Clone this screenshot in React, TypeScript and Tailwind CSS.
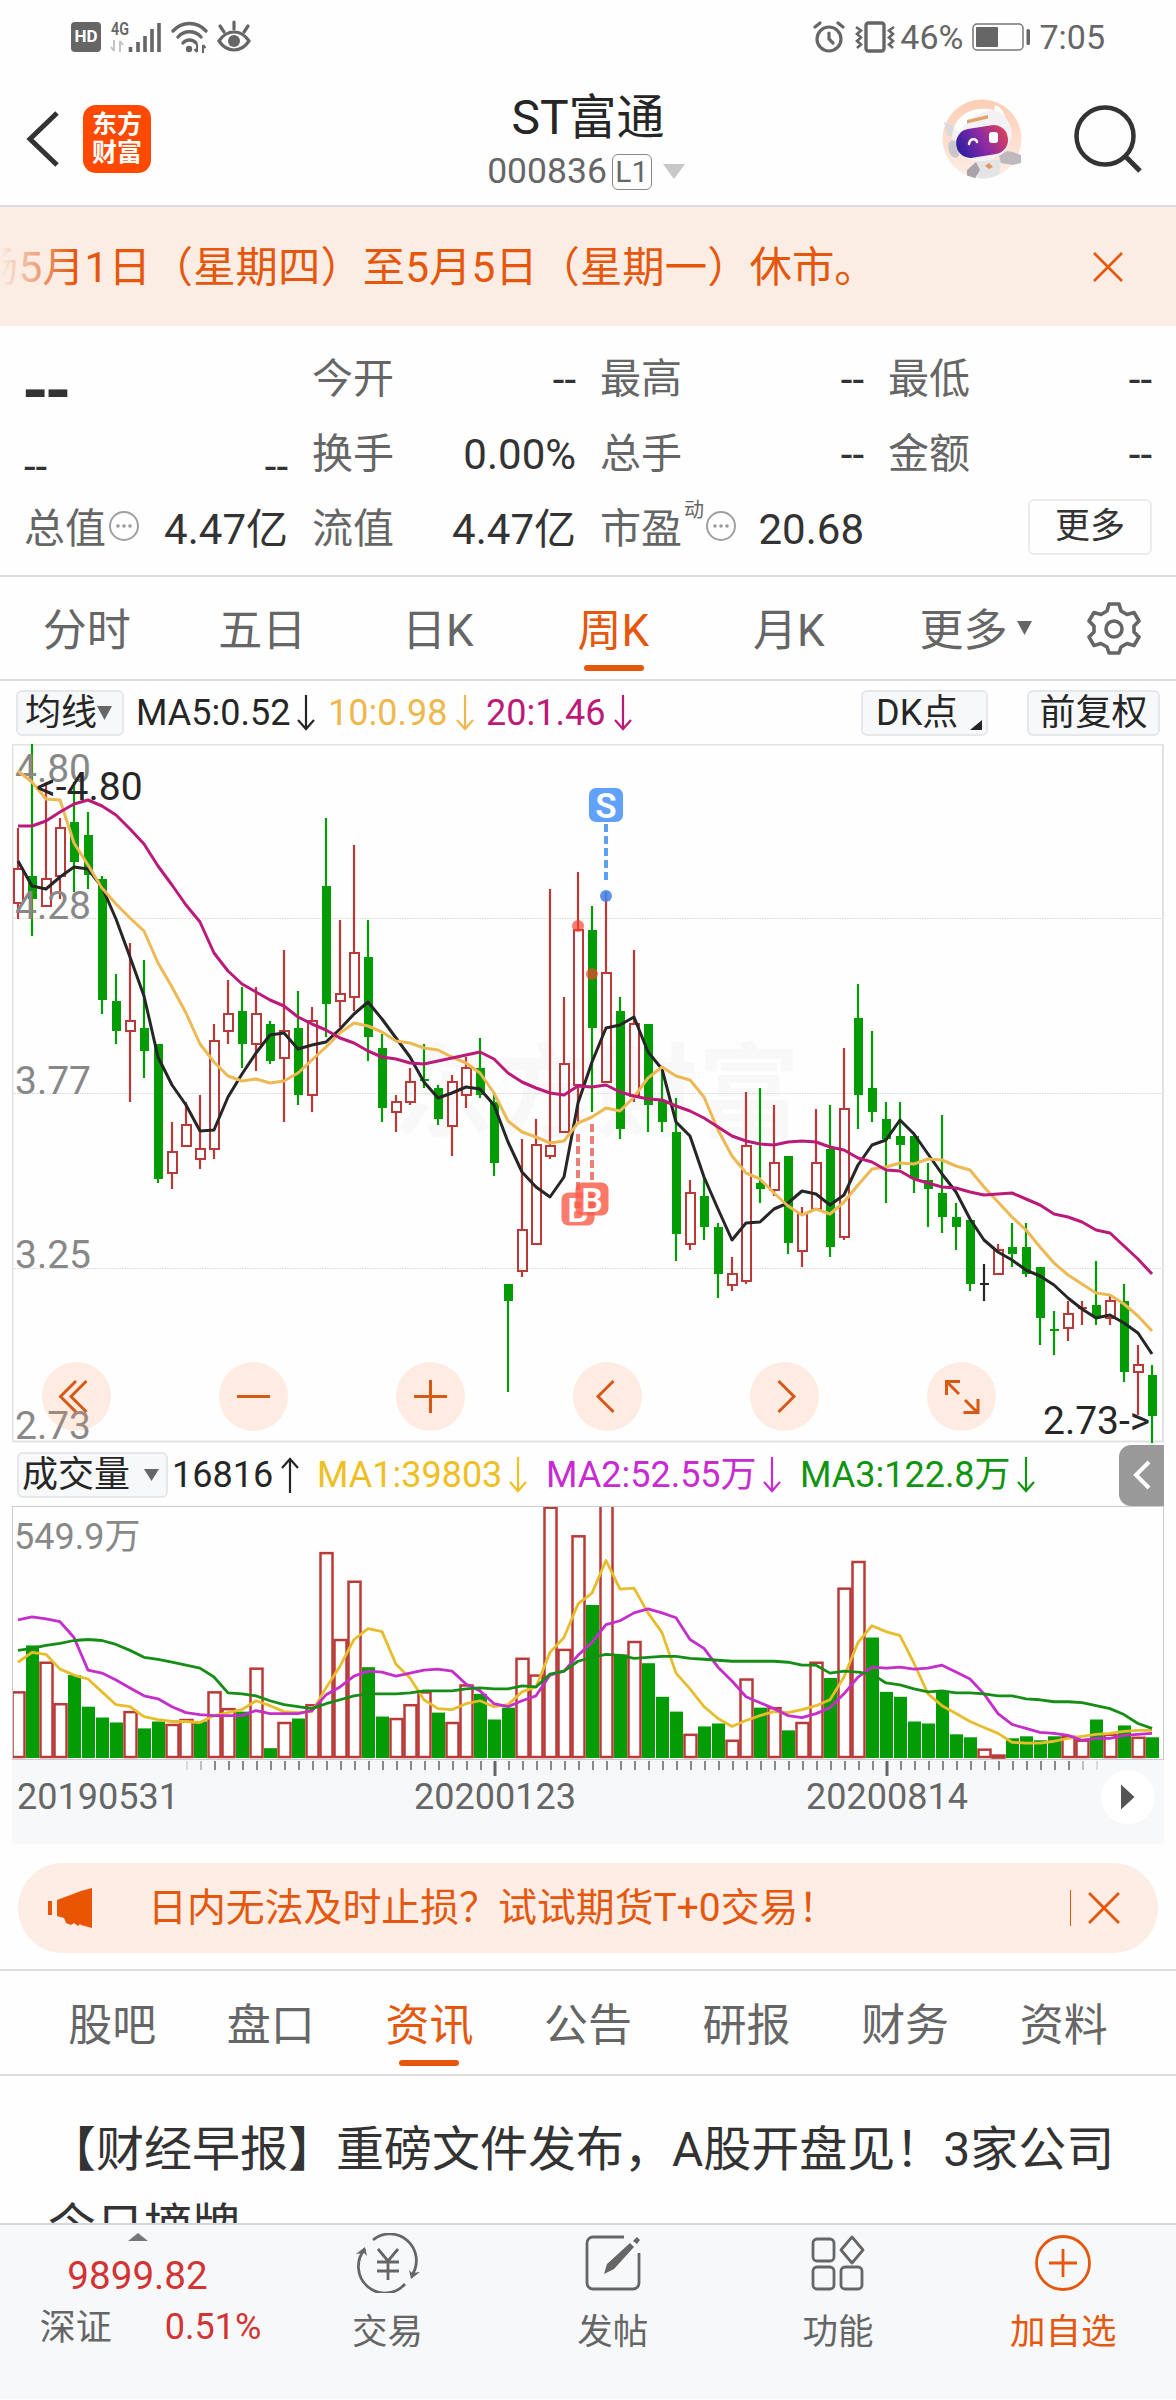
import { ReactNode } from 'react'

type Candle = [high: number, top: number, bottom: number, low: number, kind: 'r' | 'g' | 'k']

// high / body top / body bottom / low, in chart units
const candles: Candle[] = [
  [828, 868, 904, 919, 'r'], [744, 876, 899, 936, 'g'], [782, 878, 907, 907, 'r'], [818, 827, 877, 899, 'r'],
  [782, 822, 862, 892, 'g'], [812, 835, 875, 889, 'g'], [876, 879, 1000, 1014, 'g'], [974, 1001, 1031, 1044, 'g'],
  [943, 1020, 1032, 1102, 'r'], [960, 1028, 1051, 1078, 'g'], [1044, 1044, 1179, 1183, 'g'], [1122, 1151, 1174, 1189, 'r'],
  [1102, 1124, 1147, 1147, 'r'], [1095, 1148, 1160, 1169, 'r'], [1024, 1040, 1150, 1159, 'r'], [980, 1013, 1032, 1044, 'r'],
  [987, 1011, 1044, 1068, 'g'], [987, 1013, 1045, 1071, 'r'], [1021, 1024, 1061, 1064, 'g'], [950, 1030, 1059, 1122, 'r'],
  [991, 1028, 1095, 1105, 'g'], [1007, 1020, 1096, 1112, 'r'], [818, 886, 1004, 1037, 'g'], [920, 993, 1002, 1027, 'r'],
  [845, 952, 998, 1011, 'r'], [920, 957, 1037, 1061, 'g'], [1034, 1048, 1108, 1122, 'g'], [1095, 1101, 1113, 1132, 'r'],
  [1068, 1081, 1103, 1105, 'r'], [1044, 1079, 1081, 1088, 'g'], [1085, 1088, 1119, 1125, 'g'], [1075, 1081, 1127, 1156, 'r'],
  [1057, 1067, 1096, 1108, 'r'], [1038, 1068, 1095, 1098, 'g'], [1092, 1102, 1163, 1176, 'g'], [1284, 1284, 1301, 1392, 'g'],
  [1139, 1229, 1272, 1277, 'r'], [1119, 1144, 1245, 1245, 'r'], [889, 1145, 1157, 1159, 'r'], [997, 1063, 1133, 1133, 'r'],
  [872, 929, 1086, 1122, 'r'], [906, 930, 1028, 1112, 'g'], [892, 972, 1083, 1083, 'r'], [997, 1011, 1129, 1139, 'g'],
  [950, 1023, 1097, 1102, 'r'], [1024, 1024, 1105, 1132, 'g'], [1068, 1101, 1122, 1132, 'g'], [1098, 1132, 1234, 1261, 'g'],
  [1180, 1192, 1245, 1250, 'r'], [1177, 1196, 1227, 1240, 'g'], [1223, 1227, 1274, 1298, 'g'], [1257, 1273, 1286, 1291, 'r'],
  [1092, 1145, 1282, 1284, 'r'], [1088, 1183, 1189, 1203, 'g'], [1105, 1162, 1191, 1196, 'r'], [1156, 1156, 1243, 1254, 'g'],
  [1207, 1213, 1252, 1267, 'r'], [1109, 1162, 1210, 1210, 'r'], [1105, 1149, 1247, 1257, 'g'], [1048, 1108, 1238, 1240, 'r'],
  [984, 1018, 1095, 1129, 'g'], [1031, 1088, 1112, 1122, 'g'], [1102, 1119, 1139, 1203, 'g'], [1102, 1136, 1145, 1169, 'g'],
  [1135, 1136, 1179, 1193, 'g'], [1163, 1180, 1189, 1227, 'g'], [1115, 1193, 1217, 1233, 'g'], [1203, 1217, 1227, 1250, 'g'],
  [1220, 1220, 1284, 1291, 'g'], [1264, 1283, 1285, 1301, 'k'], [1244, 1249, 1275, 1275, 'r'], [1223, 1247, 1254, 1267, 'g'],
  [1223, 1247, 1274, 1277, 'g'], [1267, 1267, 1318, 1345, 'g'], [1311, 1329, 1331, 1355, 'g'], [1301, 1313, 1329, 1341, 'r'],
  [1301, 1307, 1309, 1325, 'r'], [1261, 1305, 1317, 1325, 'g'], [1295, 1300, 1319, 1325, 'r'], [1284, 1301, 1372, 1382, 'g'],
  [1345, 1364, 1373, 1415, 'r'], [1365, 1375, 1416, 1443, 'g'],
]

const ma5 = [861, 886, 889, 877, 867, 869, 887, 919, 957, 996, 1057, 1085, 1105, 1131, 1130, 1097, 1074, 1053, 1035, 1033, 1049, 1045, 1042, 1029, 1014, 1002, 1019, 1038, 1057, 1082, 1098, 1093, 1087, 1089, 1105, 1142, 1172, 1187, 1197, 1177, 1103, 1062, 1028, 1025, 1017, 1052, 1069, 1122, 1136, 1177, 1209, 1240, 1223, 1222, 1209, 1203, 1191, 1194, 1205, 1195, 1165, 1145, 1140, 1120, 1134, 1154, 1174, 1192, 1219, 1240, 1252, 1260, 1270, 1276, 1285, 1298, 1309, 1318, 1315, 1323, 1333, 1354]
const ma10 = [771, 782, 799, 800, 843, 865, 888, 904, 918, 931, 963, 987, 1013, 1044, 1062, 1076, 1081, 1079, 1083, 1081, 1073, 1060, 1047, 1033, 1023, 1026, 1032, 1041, 1043, 1048, 1050, 1057, 1063, 1073, 1093, 1121, 1132, 1137, 1143, 1141, 1123, 1117, 1108, 1111, 1097, 1078, 1067, 1076, 1080, 1097, 1130, 1156, 1173, 1179, 1193, 1206, 1215, 1209, 1214, 1202, 1185, 1169, 1167, 1163, 1164, 1159, 1160, 1166, 1170, 1187, 1202, 1217, 1230, 1247, 1263, 1275, 1284, 1293, 1295, 1304, 1316, 1331]
const ma20 = [826, 826, 821, 812, 804, 800, 806, 815, 829, 844, 866, 885, 905, 922, 953, 971, 984, 992, 1000, 1006, 1017, 1024, 1030, 1038, 1043, 1051, 1057, 1059, 1063, 1064, 1061, 1058, 1055, 1052, 1059, 1073, 1082, 1088, 1093, 1095, 1086, 1087, 1085, 1092, 1096, 1099, 1100, 1106, 1111, 1118, 1127, 1136, 1141, 1144, 1145, 1142, 1141, 1142, 1147, 1150, 1158, 1162, 1170, 1171, 1179, 1183, 1187, 1188, 1192, 1195, 1194, 1193, 1199, 1205, 1214, 1217, 1222, 1230, 1233, 1246, 1259, 1274]

const volTops = [1694, 1648, 1664, 1706, 1678, 1710, 1721, 1726, 1714, 1732, 1725, 1727, 1722, 1725, 1694, 1711, 1715, 1670, 1752, 1725, 1722, 1707, 1553, 1641, 1582, 1670, 1720, 1721, 1707, 1694, 1716, 1725, 1687, 1697, 1723, 1711, 1660, 1677, 1507, 1651, 1536, 1607, 1500, 1657, 1643, 1666, 1700, 1715, 1737, 1730, 1727, 1743, 1681, 1711, 1710, 1734, 1725, 1664, 1681, 1589, 1562, 1640, 1695, 1700, 1725, 1727, 1695, 1738, 1741, 1752, 1758, 1742, 1740, 1744, 1740, 1739, 1743, 1723, 1737, 1729, 1740, 1741]
const volColors = 'rgrrggggrggrrgrrgrgrgrrrrggrrrgrrgggrrrrrgrgrggg'.concat('rggrrgrgrrgrrgggggggg', 'rrggggrrgrgrg')
const vma1 = [1665, 1655, 1657, 1672, 1678, 1682, 1695, 1708, 1710, 1720, 1723, 1725, 1725, 1726, 1719, 1716, 1713, 1704, 1709, 1715, 1716, 1715, 1691, 1669, 1642, 1631, 1634, 1667, 1681, 1703, 1712, 1713, 1707, 1704, 1710, 1708, 1695, 1690, 1655, 1640, 1606, 1595, 1562, 1591, 1590, 1615, 1635, 1676, 1692, 1710, 1722, 1730, 1724, 1719, 1715, 1716, 1713, 1709, 1703, 1680, 1645, 1628, 1634, 1638, 1666, 1697, 1709, 1717, 1725, 1731, 1737, 1746, 1747, 1747, 1745, 1742, 1740, 1738, 1737, 1735, 1734, 1734]
const vma2 = [1622, 1619, 1621, 1624, 1640, 1673, 1676, 1683, 1691, 1699, 1702, 1710, 1716, 1718, 1719, 1719, 1719, 1714, 1717, 1717, 1717, 1714, 1698, 1690, 1679, 1674, 1675, 1679, 1676, 1673, 1672, 1674, 1687, 1694, 1707, 1710, 1704, 1699, 1678, 1674, 1658, 1645, 1627, 1623, 1615, 1611, 1615, 1620, 1642, 1651, 1670, 1684, 1700, 1706, 1712, 1719, 1721, 1717, 1711, 1697, 1680, 1670, 1671, 1670, 1672, 1671, 1668, 1675, 1682, 1697, 1717, 1728, 1732, 1736, 1737, 1739, 1744, 1742, 1742, 1739, 1738, 1737]
const vma3 = [1653, 1651, 1648, 1646, 1643, 1642, 1643, 1647, 1653, 1660, 1662, 1665, 1668, 1671, 1680, 1696, 1697, 1699, 1704, 1708, 1710, 1712, 1707, 1703, 1699, 1697, 1697, 1697, 1696, 1694, 1694, 1694, 1692, 1691, 1692, 1692, 1689, 1690, 1677, 1674, 1664, 1660, 1657, 1658, 1661, 1660, 1659, 1659, 1661, 1662, 1663, 1664, 1664, 1664, 1664, 1665, 1668, 1668, 1676, 1674, 1675, 1677, 1686, 1688, 1692, 1695, 1694, 1696, 1696, 1697, 1699, 1699, 1702, 1703, 1705, 1705, 1706, 1709, 1712, 1718, 1727, 1732]

const px = (i: number) => 18 + i * 14
const volY = (v: number) => 1440 + (v - 1440) * 0.9877
const toPoints = (values: number[]) => values.map((v, i) => `${px(i)},${v}`).join(' ')

const candleColor = { r: '#b93a38', g: '#049c04', k: '#262626' }

function StatusBar() {
  return (
    <div className="h-[72px] flex items-center justify-between pl-[71px] pr-[71px] pt-px text-[#666]">
      <div className="flex items-center">
        <div className="w-[30px] h-[30px] rounded-[4px] bg-[#666] text-white text-[17px] font-bold flex items-center justify-center leading-none">
          HD
        </div>
        <svg width="52" height="34" viewBox="0 0 52 34" className="ml-[9px]">
          <text x="1" y="15" fontSize="18" fontWeight="600" fill="#666" textLength="18" lengthAdjust="spacingAndGlyphs">4G</text>
          <path d="M4 20v11M4 31l-3-4M10 32V21M10 21l3 4" stroke="#c4c4c4" strokeWidth="2" fill="none" />
          <path d="M20.500 27v5M28 22v10M35 16v16M42 9v23M49 3v29" stroke="#666" strokeWidth="3.600" />
        </svg>
        <svg width="40" height="34" viewBox="0 0 40 34" className="ml-2">
          <g fill="none" stroke="#666" strokeWidth="3.400" strokeLinecap="round">
            <path d="M3 11c9-10 24-10 33 0" />
            <path d="M8 17c6-7 17-7 23 0" />
            <path d="M13 23c3.500-4 9.500-4 13 0" />
          </g>
          <circle cx="19" cy="29" r="3.200" fill="#666" />
          <path d="M27 24v8M27 32l-2.500-3M33 33v-8M33 25l2.500 3" stroke="#666" strokeWidth="2" />
        </svg>
        <svg width="36" height="34" viewBox="0 0 36 34" className="ml-[6px]">
          <g fill="none" stroke="#666" strokeWidth="3.200" strokeLinecap="round">
            <path d="M3 21c8-12 22-12 30 0c-8 12-22 12-30 0z" />
            <path d="M18 2v7M4 6l4 6M32 6l-4 6" />
          </g>
          <circle cx="18" cy="21" r="6" fill="#666" />
        </svg>
      </div>
      <div className="flex items-center">
        <svg width="32" height="32" viewBox="0 0 32 32">
          <g fill="none" stroke="#666" strokeWidth="3.200" strokeLinecap="round">
            <circle cx="16" cy="18" r="12" />
            <path d="M16 12v6l4 4" />
            <path d="M2 6l5-4M30 6l-5-4" />
          </g>
        </svg>
        <svg width="40" height="32" viewBox="0 0 40 32" className="ml-[10px]">
          <g fill="none" stroke="#666" strokeWidth="3.400">
            <rect x="11" y="2" width="18" height="28" rx="2.500" />
            <path strokeWidth="2.600" d="M1 6l5 3.500-4 3.500 4 3.500-4 3.500 4 3.500-4 3.500M39 6l-5 3.500 4 3.500-4 3.500 4 3.500-4 3.500 4 3.500" />
          </g>
        </svg>
        <span className="ml-[5px] text-[34px] leading-none">46%</span>
        <svg width="60" height="28" viewBox="0 0 60 28" className="ml-[9px]">
          <rect x="1" y="1" width="50" height="26" rx="4" fill="none" stroke="#777" strokeWidth="1.500" />
          <rect x="4" y="4" width="22" height="20" rx="1" fill="#666" />
          <rect x="54.500" y="6" width="3.500" height="16" rx="1.500" fill="#666" />
        </svg>
        <span className="ml-[7px] text-[34px] leading-none">7:05</span>
      </div>
    </div>
  )
}

function Robot() {
  return (
    <svg width="82" height="82" viewBox="0 0 82 82">
      <defs>
        <linearGradient id="face" x1="0" y1="0.600" x2="1" y2="0.400">
          <stop offset="0" stopColor="#2a1fa0" />
          <stop offset="0.500" stopColor="#8a2aa6" />
          <stop offset="1" stopColor="#d8405a" />
        </linearGradient>
        <linearGradient id="halo" x1="0" y1="0" x2="0" y2="1">
          <stop offset="0" stopColor="#fdcdb4" />
          <stop offset="1" stopColor="#fdeee6" />
        </linearGradient>
        <clipPath id="haloClip"><circle cx="41" cy="41" r="39.500" /></clipPath>
      </defs>
      <circle cx="41" cy="41" r="39.500" fill="url(#halo)" />
      <g clipPath="url(#haloClip)">
        <path d="M36 62h24l-3 22h-20z" fill="#e4e3e6" />
        <path d="M26 72l9-8 4 8-6 10-7-2z" fill="#a8a3a8" />
        <path d="M44 68l4-3 4 4-4 2z" fill="#e8945c" />
      </g>
      <path d="M3 24l10 4 3 12-10-3z" fill="#dcdadc" />
      <path d="M54 7c8 3 11 9 10 20l-12-9z" fill="#fbfafb" />
      <ellipse cx="41" cy="37" rx="30" ry="26" fill="#f3f1f3" transform="rotate(-12 41 37)" />
      <path d="M13 30C18 14 36 8 52 12 40 14 26 20 20 34z" fill="#fff" />
      <ellipse cx="13" cy="51" rx="5.500" ry="9" fill="#c9c6cc" transform="rotate(-14 13 51)" />
      <path d="M58 58l8-5 6 1 8 3v8l-8 2-12-2z" fill="#bdb9be" />
      <rect x="15" y="29" width="52" height="29" rx="14" fill="url(#face)" transform="rotate(-9 41 43)" />
      <path d="M28 46c1-6 7-6 8-2" fill="none" stroke="#fff" strokeWidth="2.500" strokeLinecap="round" />
      <rect x="48" y="34" width="9" height="11" rx="3" fill="#fff" />
      <path d="M26 22l21-5v3.500l-21 5z" fill="#e0a46c" />
    </svg>
  )
}

function Header() {
  return (
    <div className="h-[135px] border-b-2 border-[#dcdde0] grid grid-cols-[1fr_auto_1fr] items-center">
      <div className="flex items-center pl-[26px]">
        <svg width="34" height="56" viewBox="0 0 34 56">
          <path d="M31 2L4 28l27 26" fill="none" stroke="#333" strokeWidth="5" />
        </svg>
        <div className="ml-[23px] w-[68px] h-[68px] rounded-[13px] bg-[#ff4800] text-white text-[25px] font-bold flex flex-col items-center justify-center leading-[28px]">
          <span>东方</span>
          <span>财富</span>
        </div>
      </div>
      <div className="flex flex-col items-center pt-[2px]">
        <div className="text-[48px] leading-[56px] text-[#262626]">ST富通</div>
        <div className="flex items-center mt-[8px] ml-[-4px] text-[#666]">
          <span className="text-[35.500px] leading-none">000836</span>
          <span className="ml-[5px] w-[40px] h-[36px] rounded-[6px] border-[1.500px] border-[#888] text-[30px] leading-none flex items-center justify-center">L1</span>
          <svg width="22" height="15" viewBox="0 0 22 15" className="ml-[11px]">
            <path d="M0 0h22L11 15z" fill="#c8c8c8" />
          </svg>
        </div>
      </div>
      <div className="flex items-center justify-end pr-[33px]">
        <Robot />
        <svg width="70" height="70" viewBox="0 0 70 70" className="ml-[50px]">
          <circle cx="32" cy="32" r="28.500" fill="none" stroke="#333" strokeWidth="4.500" />
          <path d="M52 52l15 15" stroke="#333" strokeWidth="5" />
        </svg>
      </div>
    </div>
  )
}

function CloseIcon({ size = 30 }: { size?: number }) {
  return (
    <svg width={size} height={size} viewBox="0 0 30 30">
      <path d="M1 1l28 28M29 1L1 29" stroke="#e5570d" strokeWidth="2.700" />
    </svg>
  )
}

function Notice() {
  return (
    <div className="h-[119px] bg-[#fcede4] flex items-center justify-between overflow-hidden">
      <div className="relative flex-1 overflow-hidden pt-[2px]">
        <div className="ml-[-24px] text-[42.400px] leading-[60px] whitespace-nowrap text-[#e5570d]">
          场5月1日（星期四）至5月5日（星期一）休市。
        </div>
        <div className="absolute left-0 top-0 h-full w-[75px] bg-linear-to-r from-[#fcede4] to-[#fcede400]"></div>
      </div>
      <div className="pr-[53px] pt-px">
        <CloseIcon />
      </div>
    </div>
  )
}

function InfoDot() {
  return (
    <svg width="32" height="32" viewBox="0 0 32 32">
      <circle cx="16" cy="16" r="14" fill="none" stroke="#a0a0a0" strokeWidth="2" />
      <circle cx="10" cy="16" r="1.800" fill="#999" />
      <circle cx="16" cy="16" r="1.800" fill="#999" />
      <circle cx="22" cy="16" r="1.800" fill="#999" />
    </svg>
  )
}

function Cell({ label, value }: { label: string; value: string }) {
  return (
    <div className="flex items-center justify-between">
      <span className="text-[41px] text-[#666]">{label}</span>
      <span>{value}</span>
    </div>
  )
}

function Quote() {
  return (
    <div className="h-[251px] border-b-2 border-[#dcdde0] px-6 pt-[16px] text-[42px] leading-none text-[#333]">
      <div className="grid grid-cols-4 gap-x-6 auto-rows-[75px]">
        <div className="flex items-center pt-[22px] ml-[-2px] text-[68px] tracking-[-4px] font-bold">--</div>
        <Cell label="今开" value="--" />
        <Cell label="最高" value="--" />
        <Cell label="最低" value="--" />
        <div className="flex items-center justify-between pt-[24px]">
          <span>--</span>
          <span>--</span>
        </div>
        <Cell label="换手" value="0.00%" />
        <Cell label="总手" value="--" />
        <Cell label="金额" value="--" />
        <div className="flex items-center">
          <span className="text-[41px] text-[#666]">总值</span>
          <span className="ml-[2px] mb-[8px]"><InfoDot /></span>
          <span className="ml-auto">4.47亿</span>
        </div>
        <Cell label="流值" value="4.47亿" />
        <div className="flex items-center">
          <span className="text-[41px] text-[#666]">市盈</span>
          <span className="self-start mt-[8px] ml-[2px] text-[20px] text-[#666]">动</span>
          <span className="ml-px mb-[8px]"><InfoDot /></span>
          <span className="ml-auto">20.68</span>
        </div>
        <div className="flex items-center justify-end">
          <span className="w-[124px] h-[56px] mb-[6px] border-2 border-[#ebebee] rounded-[6px] text-[35px] flex items-center justify-center">更多</span>
        </div>
      </div>
    </div>
  )
}

function PeriodTabs() {
  const tabs = ['分时', '五日', '日K', '周K', '月K']
  return (
    <div className="h-[104px] border-b-2 border-[#dcdde0] flex text-[44px] leading-none text-[#666]">
      {tabs.map((tab) => (
        <div key={tab} className={`w-[175.500px] flex flex-col items-center pt-[32px] ${tab === '周K' ? 'text-[#e5570d]' : ''}`}>
          <span className="ml-[-2px]">{tab}</span>
          {tab === '周K' && <span className="mt-[12px] h-[6px] w-[60px] rounded-full bg-[#e5570d]"></span>}
        </div>
      ))}
      <div className="pt-[32px] ml-[42px] flex items-start">
        <span>更多</span>
        <svg width="15" height="14" viewBox="0 0 15 14" className="ml-[9px] mt-[12px]">
          <path d="M0 0h15L7.500 14z" fill="#666" />
        </svg>
      </div>
      <svg width="54" height="54" viewBox="0 0 54 54" className="ml-auto mr-[35px] mt-[24px]">
        <path
          d="M22 3h10l2 7 6 3.500 7-2 5 8.500-5 5v6l5 5-5 8.500-7-2-6 3.500-2 6H22l-2-6-6-3.500-7 2L2 36l5-5v-6l-5-5 5-8.500 7 2L20 10z"
          fill="none" stroke="#666" strokeWidth="3.600" strokeLinejoin="round"
        />
        <circle cx="27" cy="28" r="8" fill="none" stroke="#666" strokeWidth="3.600" />
      </svg>
    </div>
  )
}

function Arrow({ up = false }: { up?: boolean }) {
  return (
    <svg width="18" height="36" viewBox="0 0 18 36" className={up ? 'rotate-180' : ''}>
      <path d="M9 0v34M1 25l8 9 8-9" fill="none" stroke="currentColor" strokeWidth="2.200" />
    </svg>
  )
}

function Legend({ text, width, color, up }: { text: string; width: string; color: string; up?: boolean }) {
  return (
    <div className={`flex items-center justify-between ${width} ${color}`}>
      <span>{text}</span>
      <Arrow up={up} />
    </div>
  )
}

function Chip({ className, children }: { className: string; children: ReactNode }) {
  return (
    <div className={`h-[46px] rounded-[6px] border-2 border-[#e6e7ea] bg-[#f7f8fa] flex items-center ${className}`}>
      {children}
    </div>
  )
}

function MaRow() {
  return (
    <div className="h-[63px] flex items-center pl-4 pr-4 text-[36px] leading-none text-[#262626]">
      <Chip className="w-[108px] pl-[7px]">
        <span>均线</span>
        <svg width="15" height="14" viewBox="0 0 15 14">
          <path d="M0 0h15L7.500 14z" fill="#666" />
        </svg>
      </Chip>
      <Legend text="MA5:0.52" width="ml-[12px] w-[179px]" color="text-[#262626]" />
      <Legend text="10:0.98" width="ml-[13px] w-[146px]" color="text-[#efb84e]" />
      <Legend text="20:1.46" width="ml-[12px] w-[146px]" color="text-[#bb1a78]" />
      <Chip className="w-[127px] ml-auto pl-[13px] relative">
        <span>DK点</span>
        <svg width="12" height="10" viewBox="0 0 12 10" className="absolute right-[4px] bottom-[4px]">
          <path d="M12 0v10H0z" fill="#262626" />
        </svg>
      </Chip>
      <Chip className="w-[133px] ml-[39px] justify-center">前复权</Chip>
    </div>
  )
}

function PriceChart() {
  const grid = [918.5, 1093.5, 1268.5]
  const labels: [string, number][] = [['4.80', 782], ['4.28', 919], ['3.77', 1094], ['3.25', 1268], ['2.73', 1439]]
  return (
    <svg width="1152" height="700" viewBox="12 744 1152 700" className="block">
      <text x="392" y="1129" fontSize="102" fontWeight="700" fill="#f8f8f8">东方财富</text>
      {grid.map((y) => (
        <line key={y} x1="12" x2="1164" y1={y} y2={y} stroke="#d8d8d8" strokeWidth="1" strokeDasharray="1.500 1" />
      ))}
      <path d="M12.500 744V1442M1163 744V1442M12 744.500H1164M12 1441.500H1164" stroke="#e2e2e2" strokeWidth="2" />
      {candles.map(([high, top, bottom, low, kind], i) => {
        const c = px(i)
        const color = candleColor[kind]
        const flat = bottom - top <= 2
        return (
          <g key={i}>
            <path d={`M${c} ${high}V${top}M${c} ${bottom}V${low}`} stroke={color} strokeWidth="2.200" />
            {flat ? (
              <path d={`M${c - 4} ${top + 1}H${c + 5}M${c} ${high}V${low}`} stroke={color} strokeWidth="2" />
            ) : kind === 'r' ? (
              <rect x={c - 4} y={top + 1} width="9" height={bottom - top - 2} fill="none" stroke={color} strokeWidth="2" />
            ) : (
              <rect x={c - 4} y={top} width="9" height={bottom - top} fill={color} />
            )}
          </g>
        )
      })}
      <g fontSize="39" fill="#888">
        {labels.map(([text, y]) => (
          <text key={text} x="15" y={y}>{text}</text>
        ))}
      </g>
      <g fill="none" strokeWidth="3" strokeLinejoin="round">
        <polyline points={toPoints(ma5)} stroke="#262626" />
        <polyline points={toPoints(ma10)} stroke="#ecb954" />
        <polyline points={toPoints(ma20)} stroke="#bb1a78" />
      </g>
      <g fontSize="39" fill="#262626">
        <text x="36" y="800">&lt;-4.80</text>
        <text x="1043" y="1434">2.73-&gt;</text>
      </g>

      {/* trade marks */}
      <path d="M606 824v56" stroke="#5e9ff0" strokeWidth="4" strokeDasharray="8 4" />
      <circle cx="606" cy="896" r="6" fill="#3f7fe8" fillOpacity="0.850" />
      <rect x="589" y="788" width="34" height="34" rx="7" fill="#62a1fa" />
      <text x="606" y="818" fontSize="35" fontWeight="600" textAnchor="middle" fill="#fff">S</text>
      <g fill="#f4452f" fillOpacity="0.700">
        <circle cx="578" cy="926" r="6" />
        <circle cx="592" cy="974" r="6" />
      </g>
      <path d="M578 1134v58M592 1124v58" stroke="#ea8176" strokeWidth="4" strokeDasharray="8 4" />
      <rect x="561.500" y="1192.500" width="33" height="33" rx="7" fill="#fa7c6c" />
      <text x="578" y="1221.500" fontSize="34" fontWeight="600" textAnchor="middle" fill="#fff">B</text>
      <rect x="575.500" y="1182.500" width="33" height="33" rx="7" fill="#fa5c48" fillOpacity="0.820" />
      <text x="592" y="1211.500" fontSize="34" fontWeight="600" textAnchor="middle" fill="#fff">B</text>
    </svg>
  )
}

function ChartControls() {
  const paths = [
    'M34 19L18.500 34.500 34 50M44.500 19L29 34.500 44.500 50',
    'M18 34.500h33',
    'M18 34.500h33M34.500 18v33',
    'M40.500 19L25 34.500 40.500 50',
    'M28.500 19L44 34.500 28.500 50',
    'M19.500 33V19.500H33M20 20l12 12M38 38l12 12M51 37v13.500H36.500',
  ]
  return (
    <div className="absolute left-[30px] bottom-[13px] w-[954px] flex justify-between">
      {paths.map((d) => (
        <svg key={d} width="69" height="69" viewBox="0 0 69 69" className="rounded-full bg-[#ff9664]/18">
          <path d={d} fill="none" stroke="#d55a15" strokeWidth="3" />
        </svg>
      ))}
    </div>
  )
}

function VolumeRow() {
  return (
    <div className="h-[62px] flex items-center pl-[17px] text-[36px] leading-none">
      <Chip className="w-[151px] pl-[3px] text-[#262626]">
        <span>成交量</span>
        <svg width="15" height="12" viewBox="0 0 15 12" className="ml-[14px]">
          <path d="M0 0h15L7.500 12z" fill="#666" />
        </svg>
      </Chip>
      <Legend text="16816" width="ml-[4px] w-[127px]" color="text-[#262626]" up />
      <Legend text="MA1:39803" width="ml-[18px] w-[210px]" color="text-[#eec024]" />
      <Legend text="MA2:52.55万" width="ml-[19px] w-[235px]" color="text-[#c82bd0]" />
      <Legend text="MA3:122.8万" width="ml-[19px] w-[235px]" color="text-[#109410]" />
      <div className="ml-auto mr-3 w-[45px] h-[61px] rounded-l-[12px] bg-[#999] flex items-center justify-center">
        <svg width="18" height="30" viewBox="0 0 18 30">
          <path d="M16 2L3 15l13 13" fill="none" stroke="#fff" strokeWidth="4" />
        </svg>
      </div>
    </div>
  )
}

function VolumeChart() {
  return (
    <svg width="1152" height="254" viewBox="12 1506 1152 254" className="block">
      {volTops.map((v, i) => {
        const c = px(i)
        const top = volY(v)
        return volColors[i] === 'g' ? (
          <rect key={i} x={c - 6} y={top} width="13" height={1758 - top} fill="#049c04" />
        ) : (
          <rect key={i} x={c - 5.5} y={top + 1.5} width="12" height={Math.max(1755.5 - top, 2)} fill="#fff" stroke="#b93a38" strokeWidth="2.500" />
        )
      })}
      <rect x="12.500" y="1506.500" width="1151" height="253" fill="none" stroke="#ccc" />
      <text x="14" y="1549" fontSize="36" fill="#888">549.9万</text>
      <g fill="none" strokeWidth="2.800" strokeLinejoin="round">
        <polyline points={toPoints(vma1.map(volY))} stroke="#e8bd2b" />
        <polyline points={toPoints(vma2.map(volY))} stroke="#c42ecb" />
        <polyline points={toPoints(vma3.map(volY))} stroke="#168d16" />
      </g>
    </svg>
  )
}

function DateAxis() {
  const ticks = Array.from({ length: 66 }, (_, k) => k + 12)
  return (
    <div className="mx-3 h-[84px] bg-[#f7f8fa]">
      <svg width="1152" height="84" viewBox="12 1760 1152 84" className="block">
        {ticks.map((i) => {
          const major = i === 34 || i === 62
          const edge = Math.min(i - 12, 77 - i)
          return (
            <path
              key={i}
              d={`M${px(i) + 1} 1761v${major ? 15 : 9}`}
              stroke={major ? '#666' : '#888'}
              strokeWidth={major ? 3 : 2}
              opacity={edge === 0 ? 0.25 : edge === 1 ? 0.5 : 1}
            />
          )
        })}
        <g fontSize="36" fill="#666">
          <text x="17" y="1809">20190531</text>
          <text x="495" y="1809" textAnchor="middle">20200123</text>
          <text x="887" y="1809" textAnchor="middle">20200814</text>
        </g>
        <circle cx="1128" cy="1797" r="27" fill="#fff" />
        <path d="M1121 1784.500l13.500 12.500-13.500 12.500z" fill="#555" />
      </svg>
    </div>
  )
}

function Promo() {
  return (
    <div className="mx-[18px] mt-[19px] h-[90px] rounded-full bg-[#fdede4] flex items-center pl-[30px] pr-[38px] text-[#e5570d]">
      <svg width="46" height="40" viewBox="0 0 46 40">
        <path d="M0 13h4v14H0zM9 12l24-9 11-3v40l-11-3-1-1-2 2-4-3-3 2-5-2-2-5-7-2z" fill="#ea5504" />
      </svg>
      <span className="ml-[54px] text-[38.900px] leading-none">日内无法及时止损？试试期货T+0交易！</span>
      <span className="ml-auto mr-[17px] w-px h-[36px] bg-[#e5570d]"></span>
      <CloseIcon size={32} />
    </div>
  )
}

function NewsTabs() {
  const tabs = ['股吧', '盘口', '资讯', '公告', '研报', '财务', '资料']
  return (
    <div className="mt-4 h-[107px] border-y-2 border-[#dcdde0] px-[33px] grid grid-cols-7 text-[44px] leading-none text-[#666]">
      {tabs.map((tab) => (
        <div key={tab} className={`flex flex-col items-center pt-[33px] ${tab === '资讯' ? 'text-[#e5570d]' : ''}`}>
          <span>{tab}</span>
          {tab === '资讯' && <span className="mt-[12px] h-[6px] w-[60px] rounded-full bg-[#e5570d]"></span>}
        </div>
      ))}
    </div>
  )
}

const navIcons: { label: string; icon: ReactNode }[] = [
  {
    label: '交易',
    icon: (
      <>
        <path d="M17 7a26.500 26.500 0 0 1 39 35M49 51A26.500 26.500 0 0 1 9 16" />
        <path d="M0 21l9-7 2 9-3-3zM64 39l-9 7-2-9 3 3z" fill="currentColor" stroke="none" />
        <path d="M22 16l10 12 10-12M21 29h22M21 38h22M32 28v19" />
      </>
    ),
  },
  {
    label: '发帖',
    icon: (
      <>
        <path d="M43 4H12a6 6 0 0 0-6 6v40a6 6 0 0 0 6 6h40a6 6 0 0 0 6-6V20" />
        <path d="M23 41l3-10L49 10l4 4-20 22zM52 8l4-4 3 3-3 4z" fill="currentColor" stroke="none" />
      </>
    ),
  },
  {
    label: '功能',
    icon: (
      <>
        <rect x="7" y="6" width="21" height="22" rx="4" />
        <rect x="7" y="34" width="21" height="22" rx="4" />
        <rect x="35" y="34" width="21" height="22" rx="4" />
        <path d="M46 4l11 13-11 13-11-13z" strokeLinejoin="round" />
      </>
    ),
  },
  {
    label: '加自选',
    icon: (
      <>
        <circle cx="32" cy="30" r="26.500" />
        <path d="M18 30h28M32 16v28" />
      </>
    ),
  },
]

function BottomNav() {
  return (
    <div className="h-[176px] border-t-2 border-[#d5d6de] bg-[#f7f8fa] flex text-[#666]">
      <div className="w-[275px] flex flex-col items-center pt-2">
        <svg width="20" height="8" viewBox="0 0 20 8">
          <path d="M10 0l10 8H0z" fill="#777" />
        </svg>
        <div className="mt-[16px] text-[38.600px] leading-none text-[#d23434]">9899.82</div>
        <div className="mt-[13px] ml-[26px] flex gap-[53px] text-[36px] leading-none">
          <span className="pt-px">深证</span>
          <span className="text-[#d23434]">0.51%</span>
        </div>
      </div>
      <div className="flex-1 grid grid-cols-4">
        {navIcons.map(({ label, icon }) => (
          <div key={label} className={`flex flex-col items-center pt-2 ${label === '加自选' ? 'text-[#e5570d]' : ''}`}>
            <svg width="64" height="60" viewBox="0 0 64 60" fill="none" stroke="currentColor" strokeWidth="2.800">
              {icon}
            </svg>
            <span className="mt-[22px] text-[35.500px] leading-none">{label}</span>
          </div>
        ))}
      </div>
    </div>
  )
}

export default function App() {
  return (
    <div className="w-[1176px] h-[2400px] overflow-hidden bg-[#fefefe] flex flex-col font-[Roboto,'Noto_Sans_CJK_SC',sans-serif]">
      <StatusBar />
      <Header />
      <Notice />
      <Quote />
      <PeriodTabs />
      <MaRow />
      <div className="relative mx-3">
        <PriceChart />
        <ChartControls />
      </div>
      <VolumeRow />
      <div className="mx-3">
        <VolumeChart />
      </div>
      <DateAxis />
      <Promo />
      <NewsTabs />
      <div className="h-[147px] overflow-hidden px-12 pt-[35px] text-[48px] leading-[77px] text-[#333]">
        【财经早报】重磅文件发布，A股开盘见！3家公司今日摘牌
      </div>
      <BottomNav />
    </div>
  )
}
